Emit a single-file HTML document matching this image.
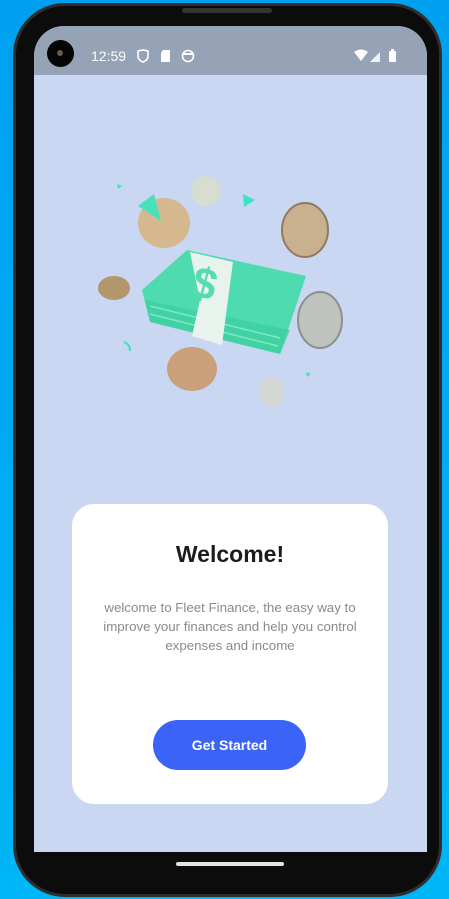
<!DOCTYPE html>
<html><head><meta charset="utf-8"><style>
*{margin:0;padding:0;box-sizing:border-box}
body{width:449px;height:899px;overflow:hidden;background:linear-gradient(#00a0f0,#00b6f6);font-family:"Liberation Sans",sans-serif;position:relative}
.phone{position:absolute;left:13px;top:3px;width:429px;height:894px;background:#0c0c0c;border-radius:52px;border:3px solid #2e2e2e}
.screen{position:absolute;left:34px;top:26px;width:393px;height:826px;background:#c9d7f2;border-radius:30px 30px 0 0;overflow:hidden}
.status{position:absolute;left:0;top:0;width:393px;height:49px;background:#96a2b6}
.card{position:absolute;left:72px;top:504px;width:316px;height:300px;background:#fff;border-radius:22px;text-align:center}
h1{position:absolute;top:37px;width:100%;font-size:23px;font-weight:bold;color:#1c1c1e}
p{position:absolute;top:94px;left:0;width:100%;font-size:13.3px;line-height:19px;color:#8a8a8a}
.btn{position:absolute;left:81px;top:216px;width:153px;height:50px;border-radius:25px;background:#3b63f6;color:#fff;font-weight:bold;font-size:14px;line-height:50px}
</style></head><body>
<div class="phone"></div>
<div style="position:absolute;left:182px;top:8px;width:90px;height:5px;background:#333;border-radius:3px"></div>
<div class="screen">
<div class="status">
<div style="position:absolute;left:13px;top:14px;width:27px;height:27px;border-radius:50%;background:#050505"></div>
<div style="position:absolute;left:23px;top:24px;width:6px;height:6px;border-radius:50%;background:#6a5a50"></div>
<div style="position:absolute;left:57px;top:22px;color:#fff;font-size:14px">12:59</div>
<svg style="position:absolute;left:102px;top:23px" width="60" height="14"><path d="M2 2l5-1 5 1v5c0 3-2 5-5 6-3-1-5-3-5-6z" fill="none" stroke="#fff" stroke-width="1.6"/><path d="M27 1h7v12h-9V4z" fill="#fff"/><circle cx="52" cy="7" r="5.5" fill="none" stroke="#fff" stroke-width="1.6"/><path d="M47 5h10" stroke="#fff" stroke-width="2"/></svg>
<svg style="position:absolute;left:320px;top:23px" width="50" height="14"><path d="M0 3q7-5 14 0l-7 9z" fill="#fff"/><path d="M16 13l10-10v10z" fill="#fff" opacity=".85"/><rect x="35" y="2" width="7" height="11" rx="1" fill="#fff"/><rect x="37" y="0" width="3" height="2" fill="#fff"/></svg>
</div>
</div>
<svg style="position:absolute;left:0;top:0" width="449" height="899">
<polygon points="117,184 122,186 118,189" fill="#3fe3c0"/>
<polygon points="243,194 255,200 244,207" fill="#3fe3c0"/>
<polygon points="306,372 311,374 307,377" fill="#3fe3c0"/>
<path d="M124 342q6 2 6 9" stroke="#3fe3c0" stroke-width="2" fill="none"/>
<ellipse cx="206" cy="191" rx="15" ry="15" fill="#d8ddd2"/>
<ellipse cx="164" cy="223" rx="26" ry="25" fill="#d6b88e"/>
<path d="M138 206l16-12 7 27z" fill="#47e2bc"/>
<ellipse cx="305" cy="230" rx="23" ry="27" fill="#c9b08e" stroke="#8f7a5e" stroke-width="2"/>
<ellipse cx="114" cy="288" rx="16" ry="12" fill="#b3966c"/>
<polygon points="142,290 187,250 306,276 280,354 150,322" fill="#4edbb0"/>
<polygon points="145,300 150,322 280,354 290,330" fill="#3ccf9f" opacity=".7"/>
<path d="M150 306l130 32M150 314l128 32" stroke="#7ee8c8" stroke-width="1.5"/>
<polygon points="190,252 233,262 222,345 192,336 200,300" fill="#e8f3ee"/>
<text x="192" y="300" font-size="44" font-weight="bold" fill="#55dbb0" transform="rotate(15 210 285)">$</text>
<ellipse cx="320" cy="320" rx="22" ry="28" fill="#bfc2bd" stroke="#8b8e89" stroke-width="2"/>
<ellipse cx="192" cy="369" rx="25" ry="22" fill="#c9a07a"/>
<ellipse cx="272" cy="392" rx="12" ry="15" fill="#d3d6d2"/>
</svg>
<div class="card"><h1>Welcome!</h1>
<p>welcome to Fleet Finance, the easy way to<br>improve your finances and help you control<br>expenses and income</p>
<div class="btn">Get Started</div></div>
<div style="position:absolute;left:176px;top:862px;width:108px;height:4px;border-radius:2px;background:#e5e5e5"></div>
</body></html>
